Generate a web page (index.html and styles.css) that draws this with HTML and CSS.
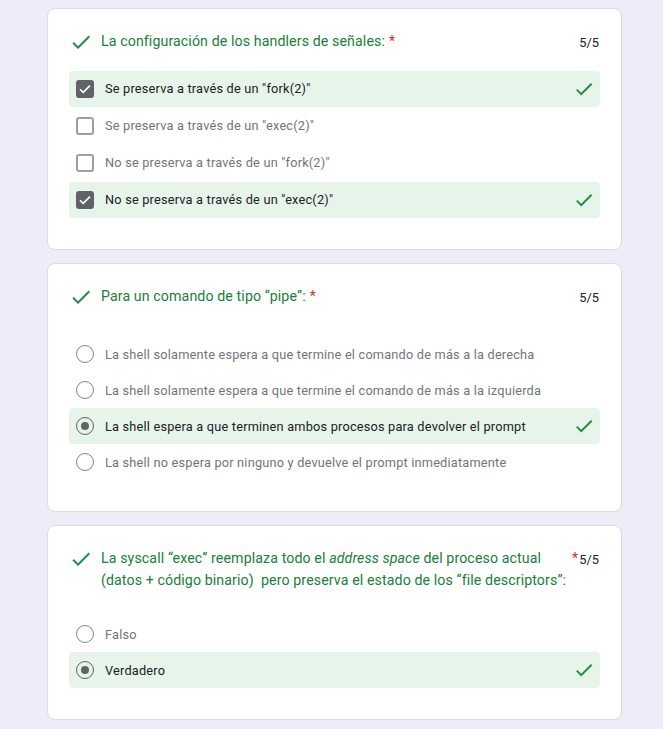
FILE: index.html
```html
<!DOCTYPE html>
<html lang="es">
<head>
<meta charset="utf-8">
<title>Formulario</title>
<link rel="stylesheet" href="styles.css">
</head>
<body>
<main class="page">

  <section class="card">
    <div class="header">
      <svg class="ok-icon" viewBox="0 0 24 24"><path d="M9 16.17L4.83 12l-1.42 1.41L9 19 21 7l-1.41-1.41z"/></svg>
      <div class="title"><span class="title-text">La configuración de los handlers de señales:</span><span class="star">*</span></div>
      <div class="score">5/5</div>
    </div>
    <div class="options options-check">
      <div class="row selected">
        <span class="box checked"><svg viewBox="0 0 18 18"><path d="M4 9.2l3.2 3.2L14 5.6" /></svg></span>
        <span class="label">Se preserva a través de un "fork(2)"</span>
        <svg class="ok-icon row-ok" viewBox="0 0 24 24"><path d="M9 16.17L4.83 12l-1.42 1.41L9 19 21 7l-1.41-1.41z"/></svg>
      </div>
      <div class="row">
        <span class="box"></span>
        <span class="label">Se preserva a través de un "exec(2)"</span>
      </div>
      <div class="row">
        <span class="box"></span>
        <span class="label">No se preserva a través de un "fork(2)"</span>
      </div>
      <div class="row selected">
        <span class="box checked"><svg viewBox="0 0 18 18"><path d="M4 9.2l3.2 3.2L14 5.6" /></svg></span>
        <span class="label">No se preserva a través de un "exec(2)"</span>
        <svg class="ok-icon row-ok" viewBox="0 0 24 24"><path d="M9 16.17L4.83 12l-1.42 1.41L9 19 21 7l-1.41-1.41z"/></svg>
      </div>
    </div>
  </section>

  <section class="card">
    <div class="header">
      <svg class="ok-icon" viewBox="0 0 24 24"><path d="M9 16.17L4.83 12l-1.42 1.41L9 19 21 7l-1.41-1.41z"/></svg>
      <div class="title"><span class="title-text">Para un comando de tipo “pipe”:</span><span class="star">*</span></div>
      <div class="score">5/5</div>
    </div>
    <div class="options options-radio options-wide">
      <div class="row">
        <span class="radio"></span>
        <span class="label">La shell solamente espera a que termine el comando de más a la derecha</span>
      </div>
      <div class="row">
        <span class="radio"></span>
        <span class="label">La shell solamente espera a que termine el comando de más a la izquierda</span>
      </div>
      <div class="row selected">
        <span class="radio on"></span>
        <span class="label">La shell espera a que terminen ambos procesos para devolver el prompt</span>
        <svg class="ok-icon row-ok" viewBox="0 0 24 24"><path d="M9 16.17L4.83 12l-1.42 1.41L9 19 21 7l-1.41-1.41z"/></svg>
      </div>
      <div class="row">
        <span class="radio"></span>
        <span class="label">La shell no espera por ninguno y devuelve el prompt inmediatamente</span>
      </div>
    </div>
  </section>

  <section class="card">
    <div class="header">
      <svg class="ok-icon" viewBox="0 0 24 24"><path d="M9 16.17L4.83 12l-1.42 1.41L9 19 21 7l-1.41-1.41z"/></svg>
      <div class="title"><span class="title-text">La syscall “exec” reemplaza todo el <em>address space</em> del proceso actual (datos + código binario)&nbsp; pero preserva el estado de los “file descriptors”:</span><span class="star">*</span></div>
      <div class="score">5/5</div>
    </div>
    <div class="options options-radio options-mid">
      <div class="row">
        <span class="radio"></span>
        <span class="label">Falso</span>
      </div>
      <div class="row selected">
        <span class="radio on"></span>
        <span class="label">Verdadero</span>
        <svg class="ok-icon row-ok" viewBox="0 0 24 24"><path d="M9 16.17L4.83 12l-1.42 1.41L9 19 21 7l-1.41-1.41z"/></svg>
      </div>
    </div>
  </section>

</main>
</body>
</html>
```
FILE: styles.css
```css
html, body {
  margin: 0;
  padding: 0;
  background: #f0ebf8;
}

body {
  font-family: Roboto, "Liberation Sans", Arial, sans-serif;
  color: #202124;
}

.page {
  padding: 8px 0 0 47px;
}

.card {
  box-sizing: border-box;
  width: 575px;
  background: #fff;
  border: 1px solid #dadce0;
  border-radius: 8px;
  padding: 22px 21px 31px 21px;
  margin-bottom: 13px;
}

.header {
  display: flex;
  align-items: flex-start;
}

.ok-icon {
  width: 24px;
  height: 24px;
  fill: #1e8e3e;
  flex: none;
}

.header .ok-icon {
  margin-top: -1px;
  margin-bottom: -2px;
  margin-right: 8px;
}

.title {
  display: flex;
  align-items: flex-start;
  flex: 1 1 auto;
  min-width: 0;
  font-size: 14.2px;
  line-height: 21.6px;
  letter-spacing: 0.1px;
  color: #188038;
}

.title-text {
  flex: 0 1 auto;
  max-width: 474px;
}

.star {
  color: #d93025;
  margin-left: 4px;
  flex: none;
}

.score {
  flex: none;
  margin-left: auto;
  padding-left: 1px;
  font-size: 12.8px;
  line-height: 21.6px;
  margin-top: 1px;
  margin-bottom: -1px;
  margin-right: 1px;
  color: #202124;
}

.options {
  display: flex;
  flex-direction: column;
  margin-top: 18px;
}

.options-check {
  gap: 1px;
}

.options-wide {
  margin-top: 29px;
}

.options-mid {
  margin-top: 25px;
}

.row {
  display: flex;
  align-items: center;
  height: 36px;
  padding: 0 5px 0 7px;
  border-radius: 4px;
}

.row.selected {
  background: #e6f4ea;
}

.label {
  flex: 1 1 auto;
  font-size: 12.75px;
  letter-spacing: 0.2px;
  color: #70757a;
  margin-left: 11px;
}

.row.selected .label {
  color: #202124;
}

.row-ok {
  width: 22px;
  height: 22px;
}

.box {
  box-sizing: border-box;
  width: 18px;
  height: 18px;
  border: 2px solid #9aa0a6;
  border-radius: 3px;
  flex: none;
  display: flex;
}

.box.checked {
  background: #5f6368;
  border-color: #5f6368;
}

.box svg {
  width: 18px;
  height: 18px;
  margin: -2px;
  fill: none;
  stroke: #fff;
  stroke-width: 1.5;
}

.radio {
  box-sizing: border-box;
  width: 18px;
  height: 18px;
  border: 1.5px solid #80868b;
  border-radius: 50%;
  flex: none;
  display: flex;
  align-items: center;
  justify-content: center;
}

.radio.on {
  border: 1.8px solid #5f6368;
}

.radio.on::after {
  content: "";
  width: 8px;
  height: 8px;
  border-radius: 50%;
  background: #5f6368;
}
```
